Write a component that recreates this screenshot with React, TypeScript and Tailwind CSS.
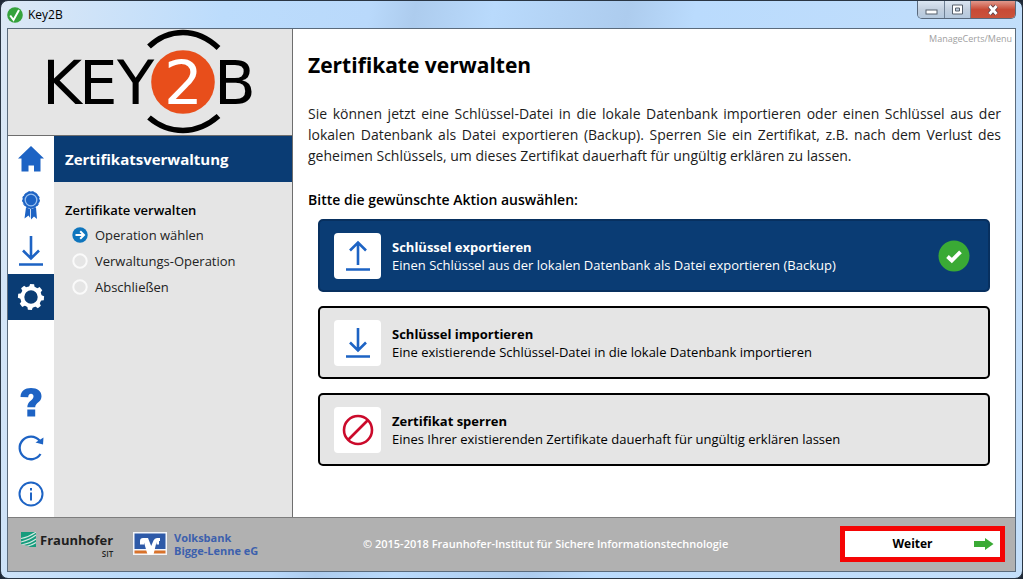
import { useState } from "react";

type IconProps = { className?: string };

function Logo() {
  return (
    <svg viewBox="8 29 285 106" className="h-[106px] w-[285px]" role="img" aria-label="KEY2B">
      <g fill="none" stroke="#000" strokeWidth="5.5">
        <path d="M149 46.500Q164 32.500 183 32.500T218.500 48" />
        <path d="M149 117.500Q164 130.500 183 130.500T218.500 116" />
      </g>
      <circle cx="183" cy="82" r="31.800" fill="#e84e1b" />
      <g fontFamily="DejaVu Sans, sans-serif" fontSize="61" fill="#000">
        <text x="42 79 117" y="104">KEY</text>
        <text x="214" y="104">B</text>
        <text x="164" y="104" fill="#fff">2</text>
      </g>
    </svg>
  );
}

function HomeIcon({ className }: IconProps) {
  return (
    <svg viewBox="0 0 28 28" className={className} aria-hidden="true">
      <path d="M14 1 27 13.500H23.500V26.500H17V20.500H11.500V26.500H4.500V13.500H1Z" fill="currentColor" />
    </svg>
  );
}

function BadgeIcon({ className }: IconProps) {
  return (
    <svg viewBox="0 0 28 30" className={className} aria-hidden="true">
      <path d="M9 17.500 7.500 28.500 11.500 25.500 13.200 28V19ZM14 19V29.500L17 26.500 20 29 19 17.500Z" fill="currentColor" />
      <circle cx="14" cy="10" r="8.400" fill="currentColor" stroke="currentColor" strokeWidth="1" strokeDasharray="2.500 1.500" />
      <circle cx="14" cy="10" r="5.800" fill="none" stroke="#9cc2f0" strokeWidth="1.300" />
    </svg>
  );
}

function DownIcon({ className }: IconProps) {
  return (
    <svg viewBox="0 0 28 32" className={className} fill="none" stroke="currentColor" strokeWidth="2.600" aria-hidden="true">
      <path d="M14 1V23M6 15.500 14 23.500 22 15.500M2 29.500H26" />
    </svg>
  );
}

function UpIcon({ className }: IconProps) {
  return (
    <svg viewBox="0 0 28 32" className={className} fill="none" stroke="currentColor" strokeWidth="2.600" aria-hidden="true">
      <path d="M14 25V3M6 10.500 14 2.500 22 10.500M2 29.500H26" />
    </svg>
  );
}

function GearIcon({ className }: IconProps) {
  return (
    <svg viewBox="-14 -14 28 28" className={className} aria-hidden="true">
      <g fill="currentColor">
        {[0, 45, 90, 135, 180, 225, 270, 315].map((angle) => (
          <path key={angle} d="M-3 -9 -2 -13H2L3 -9Z" transform={`rotate(${angle + 5})`} />
        ))}
      </g>
      <circle r="8.700" fill="none" stroke="currentColor" strokeWidth="4" />
    </svg>
  );
}

function QuestionIcon({ className }: IconProps) {
  return (
    <svg viewBox="0 0 24 30" className={className} aria-hidden="true">
      <path
        d="M1.500 10C1.800 3.800 5.800 1 12 1C18.500 1 22.500 4.200 22.500 9.200C22.500 15.500 16.200 15.300 16.200 20.300H8.300C8.300 13.800 14.500 13.500 14.500 9.500C14.500 7.700 13.500 6.800 12 6.800C10.300 6.800 9.300 8 9.200 10.300Z"
        fill="currentColor"
      />
      <path d="M8.300 22.500H16.200V29.500H8.300Z" fill="currentColor" />
    </svg>
  );
}

function RefreshIcon({ className }: IconProps) {
  return (
    <svg viewBox="0 0 28 28" className={className} aria-hidden="true">
      <path d="M23.500 20A11.300 11.300 0 1 1 22.500 6.500" fill="none" stroke="currentColor" strokeWidth="2.300" />
      <path d="M18.500 8.500 26 10.500 26.500 3.500Z" fill="currentColor" />
    </svg>
  );
}

function InfoIcon({ className }: IconProps) {
  return (
    <svg viewBox="0 0 28 28" className={className} aria-hidden="true">
      <circle cx="14" cy="14" r="11.500" fill="none" stroke="currentColor" strokeWidth="2" />
      <path d="M13 8H15V10.500H13ZM13 12.500H15V20.500H13Z" fill="currentColor" />
    </svg>
  );
}

function ForbiddenIcon({ className }: IconProps) {
  return (
    <svg viewBox="0 0 32 32" className={className} fill="none" stroke="currentColor" strokeWidth="2.600" aria-hidden="true">
      <circle cx="16" cy="16" r="14" />
      <path d="M6.500 25.500 25.500 6.500" />
    </svg>
  );
}

function CheckBadge() {
  return (
    <svg viewBox="0 0 32 32" className="h-8 w-8" aria-hidden="true">
      <circle cx="16" cy="16" r="15.500" fill="#3aaa35" />
      <path d="M9.500 16.500 13.800 20.500 22.500 11.800" fill="none" stroke="#fff" strokeWidth="3.800" />
    </svg>
  );
}

const tools = [
  { label: "Startseite", Icon: HomeIcon, active: false, size: "h-7 w-7" },
  { label: "Zertifikat", Icon: BadgeIcon, active: false, size: "h-[30px] w-7" },
  { label: "Import", Icon: DownIcon, active: false, size: "h-8 w-7" },
  { label: "Einstellungen", Icon: GearIcon, active: true, size: "h-7 w-7" },
];

const helpers = [
  { label: "Hilfe", Icon: QuestionIcon, active: false, size: "h-[30px] w-6" },
  { label: "Aktualisieren", Icon: RefreshIcon, active: false, size: "h-7 w-7" },
  { label: "Info", Icon: InfoIcon, active: false, size: "h-7 w-7" },
];

const steps = [
  { label: "Operation wählen", current: true },
  { label: "Verwaltungs-Operation", current: false },
  { label: "Abschließen", current: false },
];

const actions = [
  {
    title: "Schlüssel exportieren",
    text: "Einen Schlüssel aus der lokalen Datenbank als Datei exportieren (Backup)",
    Icon: UpIcon,
    iconClass: "h-8 w-7 text-[#1d63c4]",
  },
  {
    title: "Schlüssel importieren",
    text: "Eine existierende Schlüssel-Datei in die lokale Datenbank importieren",
    Icon: DownIcon,
    iconClass: "h-8 w-7 text-[#1d63c4]",
  },
  {
    title: "Zertifikat sperren",
    text: "Eines Ihrer existierenden Zertifikate dauerhaft für ungültig erklären lassen",
    Icon: ForbiddenIcon,
    iconClass: "h-8 w-8 text-[#cb0a2b]",
  },
];

function ToolButtons({ items }: { items: typeof tools }) {
  return (
    <div className="flex flex-col">
      {items.map(({ label, Icon, active, size }) => (
        <button
          key={label}
          type="button"
          aria-label={label}
          className={
            active
              ? "flex h-[46px] items-center justify-center bg-[#0a3c74] text-white"
              : "flex h-[46px] items-center justify-center text-[#1d63c4]"
          }
        >
          <Icon className={size} />
        </button>
      ))}
    </div>
  );
}

function TitleBar() {
  return (
    <header className="flex h-[27px] items-start justify-between">
      <div className="flex h-[27px] items-center gap-[5px]">
        <svg viewBox="0 0 16 16" className="h-4 w-4" aria-hidden="true">
          <circle cx="8" cy="8" r="7.800" fill="#35a23c" />
          <path d="M3.200 8.500 6.500 13 12 3" fill="none" stroke="#fff" strokeWidth="2" />
        </svg>
        <span className="text-[12px] leading-4">Key2B</span>
      </div>
      <div className="flex h-[18px] overflow-hidden rounded-b-[5px] border border-t-0 border-[#59697c]">
        <button type="button" aria-label="Minimieren" className="flex w-[27px] items-center justify-center border-r border-[#6f8195] bg-linear-to-b from-[#dbe6f2] via-[#c3d0df] to-[#b4c8dd]">
          <svg viewBox="0 0 13 11" className="h-[11px] w-[13px]" aria-hidden="true">
            <rect x="1" y="6" width="11" height="4" fill="#fff" stroke="#56606c" />
          </svg>
        </button>
        <button type="button" aria-label="Maximieren" className="flex w-[26px] items-center justify-center border-r border-[#6f8195] bg-linear-to-b from-[#dbe6f2] via-[#c3d0df] to-[#b4c8dd]">
          <svg viewBox="0 0 13 11" className="h-[11px] w-[13px]" aria-hidden="true">
            <path d="M1.500 1H11.500V10H1.500ZM4.500 4V7H8.500V4Z" fill="#fff" fillRule="evenodd" stroke="#56606c" />
          </svg>
        </button>
        <button type="button" aria-label="Schließen" className="flex w-[44px] items-center justify-center bg-linear-to-b from-[#e0988c] via-[#c84a36] to-[#c9523a]">
          <svg viewBox="0 0 14 12" className="h-3 w-[14px]" aria-hidden="true">
            <path d="M3.500 2 10.500 10M10.500 2 3.500 10" stroke="#5d4048" strokeWidth="4.600" />
            <path d="M3.500 2 10.500 10M10.500 2 3.500 10" stroke="#fff" strokeWidth="2.800" />
          </svg>
        </button>
      </div>
    </header>
  );
}

function Sidebar() {
  return (
    <aside className="flex w-[285px] shrink-0 flex-col border-r border-[#6e6e6e] bg-[#e5e5e5]">
      <div className="h-[107px] border-b border-[#6e6e6e]">
        <Logo />
      </div>
      <div className="flex grow">
        <nav className="flex w-[46px] shrink-0 flex-col justify-between bg-white">
          <ToolButtons items={tools} />
          <ToolButtons items={helpers} />
        </nav>
        <div className="grow">
          <h2 className="flex h-[46px] items-center bg-[#0a3c74] px-[11px] text-[15px] font-bold text-white">
            Zertifikatsverwaltung
          </h2>
          <div className="px-[11px] pt-[18px]">
            <h3 className="text-[13px] leading-5 font-semibold">Zertifikate verwalten</h3>
            <ol className="mt-[2px] flex flex-col">
              {steps.map((step) => (
                <li key={step.label} className="flex h-[26px] items-center gap-[7px] pl-[7px] text-[13px] leading-5 text-[#222]">
                  <svg viewBox="0 0 16 16" className="h-4 w-4" aria-hidden="true">
                    {step.current ? (
                      <>
                        <circle cx="8" cy="8" r="7.700" fill="#0f75bd" />
                        <path d="M3.500 8H12M8.200 4.200 12 8 8.200 11.800" fill="none" stroke="#fff" strokeWidth="2" />
                      </>
                    ) : (
                      <circle cx="8" cy="8" r="6.700" fill="none" stroke="#fafafa" strokeWidth="2" />
                    )}
                  </svg>
                  {step.label}
                </li>
              ))}
            </ol>
          </div>
        </div>
      </div>
    </aside>
  );
}

function Footer() {
  return (
    <footer className="flex h-[54px] items-center border-t border-[#7d7d7d] bg-[#b1b1b1] pr-[10px] pb-[2px] pl-[13px]">
      <div className="flex w-[112px] shrink-0 items-start gap-1">
        <svg viewBox="0 0 15 15" className="mt-[2px] h-[15px] w-[15px]" aria-hidden="true">
          <path d="M0 0H15V15H0Z" fill="#179c7d" />
          <path d="M0 6.500Q8 5 15 0M0 10Q9 7.500 15 3M0 13Q10 11 15 7M3 15Q11 13.500 15 10.500" fill="none" stroke="#d5e8e2" strokeWidth="1.100" />
          <path d="M0 12.500Q6 13 9 15H0Z" fill="#b1b1b1" />
        </svg>
        <div className="flex flex-col text-[#1f1f1f]">
          <span className="text-[13px] leading-5 font-bold">Fraunhofer</span>
          <span className="text-right text-[8px] leading-[8px] font-semibold">SIT</span>
        </div>
      </div>
      <div className="flex shrink-0 items-center gap-[7px]">
        <svg viewBox="0 0 34 23" className="h-[23px] w-[34px]" aria-hidden="true">
          <path d="M0 0H34V23H0Z" fill="#f4f6fa" />
          <path d="M1.500 1.500H32.500V17H1.500Z" fill="#2e5aa8" />
          <path d="M1.500 18.500H32.500V21.500H1.500Z" fill="#d8722b" />
          <path d="M7 12.500V9Q7 6 10 6H15L18.200 14 20.500 8.500Q21.500 6 24 6H27V9H26V12.500H23.500V10L20.500 22.500H14.500L11 10.500V12.500Z" fill="#fff" />
        </svg>
        <p className="text-[11px] leading-[13px] font-bold text-[#3c60ad]">
          Volksbank
          <br />
          Bigge-Lenne eG
        </p>
      </div>
      <p className="grow pt-[2px] pr-[7px] text-center text-[11px] font-semibold text-white">
        © 2015-2018 Fraunhofer-Institut für Sichere Informationstechnologie
      </p>
      <button type="button" className="flex h-9 w-[165px] shrink-0 items-center border-5 border-[#f50505] bg-white px-[6px] text-[12px] font-bold">
        <span className="grow text-center">Weiter</span>
        <svg viewBox="0 0 20 12" className="h-3 w-5" aria-hidden="true">
          <path d="M0 3H11V0L19.500 6 11 12V9H0Z" fill="#3aaa35" />
        </svg>
      </button>
    </footer>
  );
}

export default function App() {
  const [selected, setSelected] = useState(0);

  return (
    <div className="flex min-h-screen flex-col bg-[#1f2937] font-['Open_Sans','Noto_Sans',sans-serif] text-black">
      <div className="flex grow flex-col rounded-lg border border-[#2a3644] bg-[linear-gradient(100deg,#dce8f5_0%,#bcdcfc_20%,#b9d9fb_33%,#adccee_37%,#b9dafc_44%,#adccee_56%,#badbfd_62%,#c4dffa_100%)] px-[6px] pb-[6px]">
        <TitleBar />
        <div className="flex grow flex-col border border-[#5b6b7c] bg-white">
          <div className="flex grow">
            <Sidebar />
            <main className="min-w-0 grow">
              <p className="pt-[2px] pr-[3px] text-right text-[9px] leading-4 text-[#a0a0a0]">ManageCerts/Menu</p>
              <div className="pr-[14px] pl-[15px]">
                <h1 className="text-[21px] leading-9 font-bold">Zertifikate verwalten</h1>
                <p className="mt-5 text-justify text-[14px] leading-[21px] text-[#1c1c1c]">
                  Sie können jetzt eine Schlüssel-Datei in die lokale Datenbank importieren oder einen Schlüssel aus der
                  lokalen Datenbank als Datei exportieren (Backup). Sperren Sie ein Zertifikat, z.B. nach dem Verlust des
                  geheimen Schlüssels, um dieses Zertifikat dauerhaft für ungültig erklären zu lassen.
                </p>
                <p className="mt-6 text-[14px] leading-5 font-semibold">Bitte die gewünschte Aktion auswählen:</p>
                <div className="mt-[9px] flex flex-col gap-[14px] pr-[11px] pl-[10px]">
                  {actions.map(({ title, text, Icon, iconClass }, index) => (
                    <button
                      key={title}
                      type="button"
                      aria-pressed={selected === index}
                      onClick={() => setSelected(index)}
                      className={
                        selected === index
                          ? "flex h-[73px] items-center rounded-[5px] border-2 border-[#08305f] bg-[#0a3c74] pr-[18px] pl-[14px] text-left text-white"
                          : "flex h-[73px] items-center rounded-[5px] border-2 border-black bg-[#e5e5e5] pr-[18px] pl-[14px] text-left text-black"
                      }
                    >
                      <span className="flex h-[46px] w-[47px] shrink-0 items-center justify-center rounded-[4px] bg-white">
                        <Icon className={iconClass} />
                      </span>
                      <span className="flex grow flex-col pl-[11px] text-[13px] leading-[18px]">
                        <span className="font-bold">{title}</span>
                        <span>{text}</span>
                      </span>
                      {selected === index && <CheckBadge />}
                    </button>
                  ))}
                </div>
              </div>
            </main>
          </div>
          <Footer />
        </div>
      </div>
    </div>
  );
}
